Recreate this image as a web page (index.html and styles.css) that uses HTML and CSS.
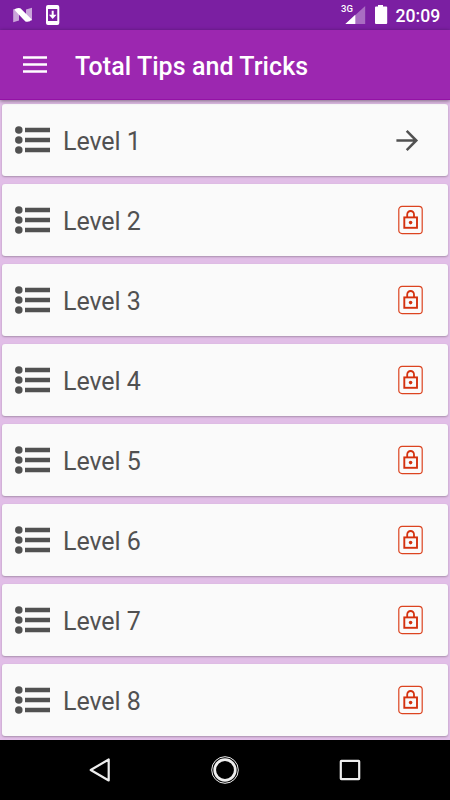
FILE: index.html
```
<!DOCTYPE html>
<html lang="en">
<head>
<meta charset="utf-8">
<title>Total Tips and Tricks</title>
<link rel="stylesheet" href="styles.css">
</head>
<body>
<svg class="defs" aria-hidden="true">
  <symbol id="list" viewBox="0 0 36 28">
    <circle cx="3.8" cy="4" r="3.75"/><circle cx="3.8" cy="14" r="3.75"/><circle cx="3.8" cy="24" r="3.75"/>
    <path d="M10 1.7h25v4.6h-25zM10 11.7h25v4.6h-25zM10 21.7h25v4.6h-25z"/>
  </symbol>
  <symbol id="lock" viewBox="0 0 26 30">
    <rect x=".8" y="1.4" width="23.4" height="27.2" rx="3.2" fill="none" stroke="#dc4420" stroke-width="1.2"/>
    <path d="M9.2 12V9.4a3.4 3.4 0 0 1 6.8 0V12" fill="none" stroke="#d43210" stroke-width="1.8"/>
    <rect x="6.3" y="12.4" width="12.7" height="10.4" fill="none" stroke="#d43210" stroke-width="1.9"/>
    <circle cx="12.6" cy="17.6" r="1.8" fill="#d43210"/>
  </symbol>
  <symbol id="arrow" viewBox="0 0 26 30">
    <path d="M-1.6 15.5H17.8M8.7 5.9l9.6 9.6-9.6 9.6" fill="none" stroke="#515151" stroke-width="2.5"/>
  </symbol>
</svg>
<header class="status">
  <svg class="status-left" width="70" height="30" viewBox="0 0 70 30">
    <path d="M13.2 9l5.8 4v7.5l-5.8 1.8zM26 9.5l6-1.8v13l-6-3z" fill="#fff" fill-opacity=".6"/>
    <path d="M14 9.6Q17 7.2 20.4 8.2L31.8 19.6Q29.6 22.6 25.4 21.6z" fill="#fff"/>
    <path fill="#fff" fill-rule="evenodd" d="M48 5h9.3a2 2 0 0 1 2 2v16a2 2 0 0 1-2 2H48a2 2 0 0 1-2-2V7a2 2 0 0 1 2-2zm0 4v12h9.3V9z"/>
    <path d="M51.7 10.7h2v4h2.8L52.7 19l-3.8-4.3h2.8z" fill="#fff"/>
  </svg>
  <div class="status-right">
    <span class="net">3G</span>
    <svg width="50" height="30" viewBox="0 0 50 30">
      <path d="M20.2 6v18H.5z" fill="#fff" fill-opacity=".35"/>
      <path d="M10.3 14.8V24H.3z" fill="#fff"/>
      <path d="M33 5h5v1.5h3.2a1 1 0 0 1 1 1V23a1 1 0 0 1-1 1H31a1 1 0 0 1-1-1V7.5a1 1 0 0 1 1-1h2z" fill="#fff"/>
    </svg>
    <time class="clock">20:09</time>
  </div>
</header>
<nav class="toolbar">
  <svg width="24" height="18" viewBox="0 0 24 18" fill="#fff"><path d="M0 .2h24v2.6H0zM0 7.2h24v2.6H0zM0 14.2h24v2.6H0z"/></svg>
  <h1 class="title">Total Tips and Tricks</h1>
</nav>
<main class="levels">
  <div class="card"><svg class="list"><use href="#list"/></svg><span class="label">Level 1</span><svg class="end"><use href="#arrow"/></svg></div>
  <div class="card"><svg class="list"><use href="#list"/></svg><span class="label">Level 2</span><svg class="end"><use href="#lock"/></svg></div>
  <div class="card"><svg class="list"><use href="#list"/></svg><span class="label">Level 3</span><svg class="end"><use href="#lock"/></svg></div>
  <div class="card"><svg class="list"><use href="#list"/></svg><span class="label">Level 4</span><svg class="end"><use href="#lock"/></svg></div>
  <div class="card"><svg class="list"><use href="#list"/></svg><span class="label">Level 5</span><svg class="end"><use href="#lock"/></svg></div>
  <div class="card"><svg class="list"><use href="#list"/></svg><span class="label">Level 6</span><svg class="end"><use href="#lock"/></svg></div>
  <div class="card"><svg class="list"><use href="#list"/></svg><span class="label">Level 7</span><svg class="end"><use href="#lock"/></svg></div>
  <div class="card"><svg class="list"><use href="#list"/></svg><span class="label">Level 8</span><svg class="end"><use href="#lock"/></svg></div>
</main>
<footer class="navbar">
  <svg width="30" height="30" viewBox="0 0 30 30"><path d="M6 15L24 4.5v21z" transform="translate(-.3 0)"/></svg>
  <svg width="30" height="30" viewBox="0 0 30 30"><circle cx="15" cy="15" r="13.3" stroke-width="1"/><circle cx="15" cy="15" r="10.3" stroke-width="2.7"/></svg>
  <svg width="30" height="30" viewBox="0 0 30 30"><rect x="5.8" y="5.8" width="18.4" height="18.4" rx=".6"/></svg>
</footer>
</body>
</html>
```

FILE: styles.css
```
* { box-sizing: border-box; }
body {
  margin: 0;
  width: 450px;
  height: 800px;
  overflow: hidden;
  display: flex;
  flex-direction: column;
  background: #e1bee7;
  font-family: Roboto, sans-serif;
}
.defs { position: absolute; width: 0; height: 0; }
.status {
  height: 30px;
  flex: none;
  display: flex;
  justify-content: space-between;
  background: #7b1fa2;
  color: #fff;
}
.status svg { display: block; }
.status-right { display: flex; padding-right: 10px; }
.net { font-size: 9.5px; font-weight: 500; line-height: 11px; padding-top: 3px; width: 5px; text-indent: 1px; white-space: nowrap; }
.clock { font-size: 17.6px; font-weight: 500; line-height: 32px; width: 45px; text-indent: .5px; }
.toolbar {
  height: 70px;
  flex: none;
  display: flex;
  align-items: center;
  gap: 28px;
  padding-left: 23px;
  background: #9c27b0;
  border-bottom: 1px solid #9412a6;
  box-shadow: 0 1px 4px rgba(0, 0, 0, .45);
  position: relative;
}
.title { margin: 0; padding-top: 5px; color: #fff; font-size: 25px; font-weight: 500; line-height: 30px; letter-spacing: .06px; }
.levels {
  flex: 1;
  display: flex;
  flex-direction: column;
  gap: 8px;
  padding: 4px 2px;
}
.card {
  height: 72px;
  flex: none;
  display: flex;
  align-items: center;
  padding: 0 24px 0 13px;
  background: #fafafa;
  border-radius: 3px;
  box-shadow: 0 1px 2px rgba(0, 0, 0, .25);
}
.list { width: 36px; height: 28px; fill: #515151; }
.label { flex: 1; padding: 4px 0 0 12px; color: #515151; font-size: 25px; line-height: 30px; letter-spacing: -.05px; }
.end { width: 26px; height: 30px; overflow: visible; }
#arrow { overflow: visible; }
.navbar {
  position: relative;
  height: 60px;
  flex: none;
  display: flex;
  align-items: center;
  justify-content: center;
  gap: 95px;
  background: #000;
}
.navbar svg { fill: none; stroke: #eee; stroke-width: 2.2; stroke-linejoin: round; }
```
